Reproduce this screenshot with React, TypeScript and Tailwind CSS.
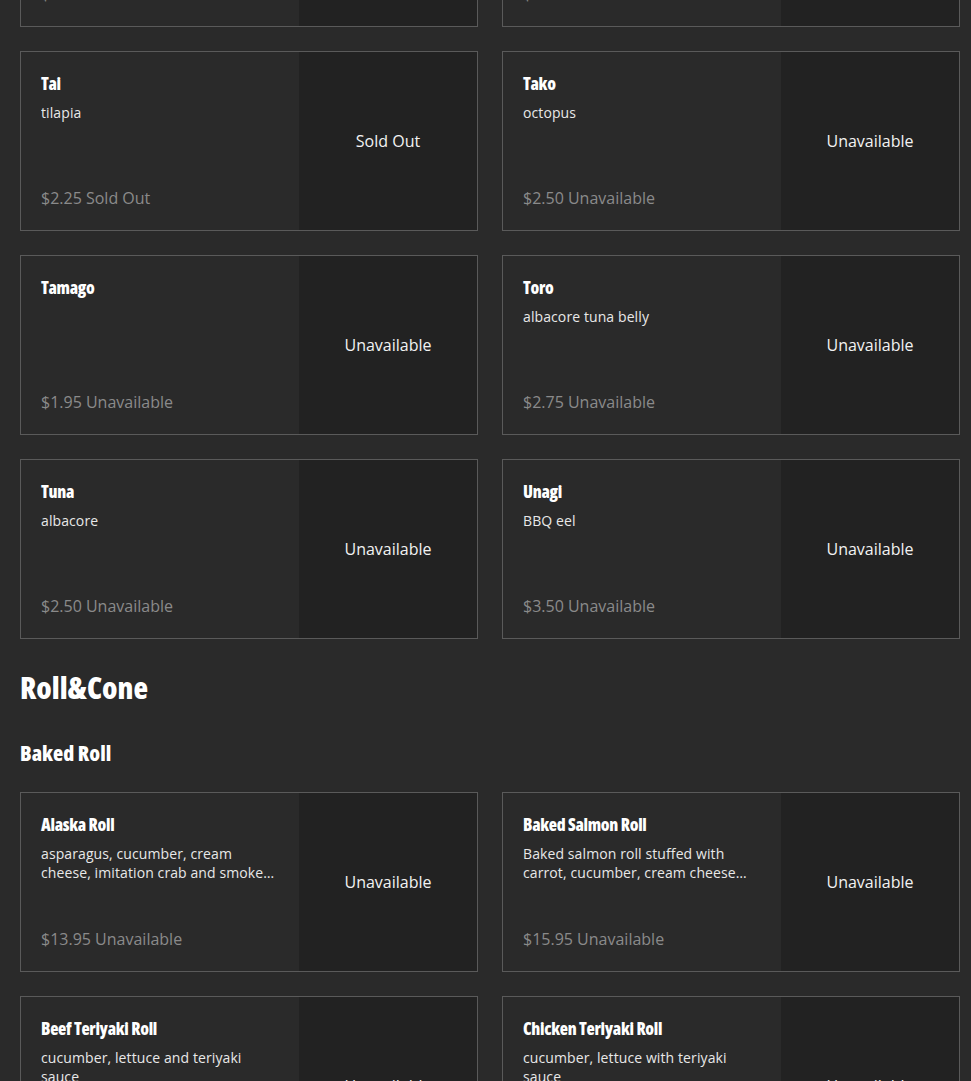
import React from "react";

type MenuItem = {
  name: string;
  description?: string;
  price: string;
  status: "Unavailable" | "Sold Out";
};

const nigiriTop: MenuItem[] = [
  { name: "Sake", description: "salmon", price: "$2.50", status: "Unavailable" },
  { name: "Saba", description: "mackerel", price: "$2.25", status: "Unavailable" },
];

const nigiri: MenuItem[] = [
  { name: "Tai", description: "tilapia", price: "$2.25", status: "Sold Out" },
  { name: "Tako", description: "octopus", price: "$2.50", status: "Unavailable" },
  { name: "Tamago", price: "$1.95", status: "Unavailable" },
  { name: "Toro", description: "albacore tuna belly", price: "$2.75", status: "Unavailable" },
  { name: "Tuna", description: "albacore", price: "$2.50", status: "Unavailable" },
  { name: "Unagi", description: "BBQ eel", price: "$3.50", status: "Unavailable" },
];

const bakedRolls: MenuItem[] = [
  {
    name: "Alaska Roll",
    description: "asparagus, cucumber, cream cheese, imitation crab and smoked salmon on top, baked",
    price: "$13.95",
    status: "Unavailable",
  },
  {
    name: "Baked Salmon Roll",
    description: "Baked salmon roll stuffed with carrot, cucumber, cream cheese and imitation crab",
    price: "$15.95",
    status: "Unavailable",
  },
  {
    name: "Beef Teriyaki Roll",
    description: "cucumber, lettuce and teriyaki sauce",
    price: "$13.95",
    status: "Unavailable",
  },
  {
    name: "Chicken Teriyaki Roll",
    description: "cucumber, lettuce with teriyaki sauce",
    price: "$12.95",
    status: "Unavailable",
  },
];

// condensed heavy face, closest thing to Impact we have offline
const heading = "font-['Open_Sans',sans-serif] font-stretch-condensed font-extrabold text-white";

function ItemCard({ item }: { item: MenuItem }) {
  return (
    <div className="flex h-[180px] border border-[#5a5a5a] bg-[#2a2a2a]">
      <div className="flex min-w-0 flex-1 flex-col px-5 pt-5 pb-[21px]">
        <h4 className={`${heading} text-[17px] leading-6 tracking-[-0.3px]`}>{item.name}</h4>
        {item.description && (
          <p className="mt-[7px] line-clamp-2 text-[14px] leading-[19px] tracking-[0.1px] text-[#e8e8e8]">
            {item.description}
          </p>
        )}
        <p className="mt-auto text-[16px] leading-[22px] text-[#8a8a8a]">
          {item.price} {item.status}
        </p>
      </div>
      <div className="flex w-[178px] shrink-0 items-center justify-center bg-[#222222] text-[16px] text-[#f2f2f2]">
        {item.status}
      </div>
    </div>
  );
}

export default function App() {
  return (
    <div className="min-h-[1081px] overflow-hidden bg-[#2a2a2a] font-['Open_Sans',sans-serif]">
      <div className="-mt-[153px] ml-5 w-[940px] pb-10">
        <div className="grid grid-cols-2 gap-6">
          {nigiriTop.map((item) => (
            <ItemCard key={item.name} item={item} />
          ))}
          {nigiri.map((item) => (
            <ItemCard key={item.name} item={item} />
          ))}
        </div>

        <h2 className={`${heading} mt-[29px] text-[30px] leading-[40px]`}>Roll&amp;Cone</h2>
        <h3 className={`${heading} mt-[30px] text-[21px] leading-[30px]`}>Baked Roll</h3>

        <div className="mt-6 grid grid-cols-2 gap-6">
          {bakedRolls.map((item) => (
            <ItemCard key={item.name} item={item} />
          ))}
        </div>
      </div>
    </div>
  );
}
